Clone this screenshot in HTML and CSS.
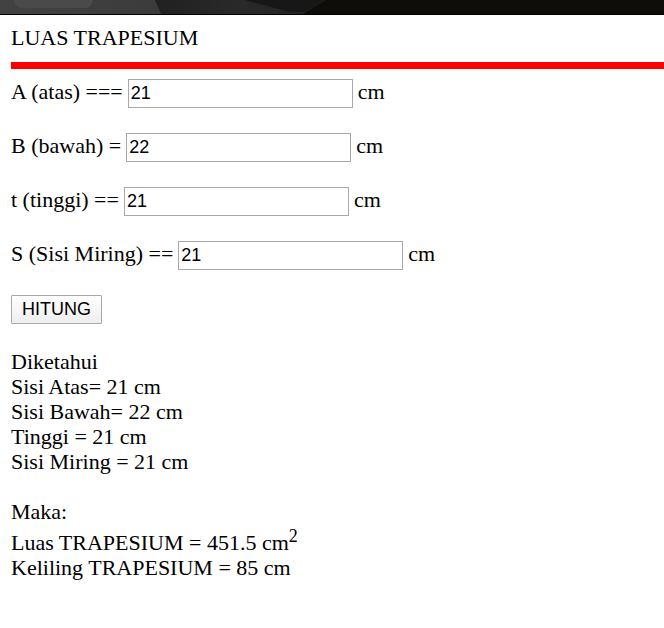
FILE: index.html
```html
<!DOCTYPE html>
<html lang="id">
<head>
<meta charset="utf-8">
<title>Luas Trapesium</title>
<link rel="stylesheet" href="styles.css">
</head>
<body>
<div class="topbar"><svg class="topbar-art" viewBox="0 0 664 14" preserveAspectRatio="none" aria-hidden="true">
<defs>
<linearGradient id="shade"><stop offset="0" stop-color="#424242"/><stop offset="1" stop-color="#3b3b3b"/></linearGradient>
<linearGradient id="fold"><stop offset="0" stop-color="#202020"/><stop offset="0.5" stop-color="#292929"/><stop offset="1" stop-color="#222"/></linearGradient>
</defs>
<path fill="#0e0d0a" d="M0 0H664V14H0Z"/>
<path fill="url(#fold)" d="M150 0H326L303 14H150Z"/>
<path fill="url(#shade)" d="M0 0H155L161 14H0Z"/>
<path fill="#171717" d="M245 0H326L306 12L290 12Z"/>
<rect x="14" y="-10" width="79" height="18" rx="8" fill="#4a4a4a"/></svg></div>
<main class="page">
<div class="title">LUAS TRAPESIUM</div>
<hr class="rule">
<form class="form">
<div class="row"><label for="a">A (atas) ===</label><input class="field" id="a" type="text" value="21"><span>cm</span></div>
<div class="row"><label for="b">B (bawah) =</label><input class="field" id="b" type="text" value="22"><span>cm</span></div>
<div class="row"><label for="t">t (tinggi) ==</label><input class="field" id="t" type="text" value="21"><span>cm</span></div>
<div class="row"><label for="s">S (Sisi Miring) ==</label><input class="field" id="s" type="text" value="21"><span>cm</span></div>
<button class="submit" type="button">HITUNG</button>
</form>
<p class="result">Diketahui<br>Sisi Atas= 21 cm<br>Sisi Bawah= 22 cm<br>Tinggi = 21 cm<br>Sisi Miring = 21 cm</p>
<p class="result">Maka:<br>Luas TRAPESIUM = 451.5 cm<sup>2</sup><br>Keliling TRAPESIUM = 85 cm</p>
</main>
</body>
</html>
```
FILE: styles.css
```css
body {
  margin: 0;
  background: #fff;
  color: #000;
  font: 22px/25px "Liberation Serif", "Times New Roman", serif;
}
.topbar {
  border-bottom: 1px solid #000;
}
.topbar-art {
  display: block;
  width: 100%;
  height: 14px;
}
.page {
  padding: 10px 0 0 11px;
}
.rule {
  height: 7px;
  margin: 12px 0 10px;
  border: 0;
  background: #f00;
}
.form {
  display: flex;
  flex-direction: column;
  align-items: flex-start;
  gap: 25px;
}
.row {
  display: flex;
  align-items: baseline;
  gap: 5px;
}
.field {
  box-sizing: border-box;
  width: 225px;
  height: 29px;
  padding: 1px 2px;
  border: 1px solid #a9a9a9;
  font: 18px "Liberation Sans", Arial, sans-serif;
}
.submit {
  height: 29px;
  padding: 0 10px;
  border: 1px solid #a9a9a9;
  border-radius: 1px;
  background: linear-gradient(#fff, #eee);
  color: #000;
  font: 18px "Liberation Sans", Arial, sans-serif;
}
.result {
  margin: 25px 0 0;
}
sup {
  font-size: 18px;
}
```
